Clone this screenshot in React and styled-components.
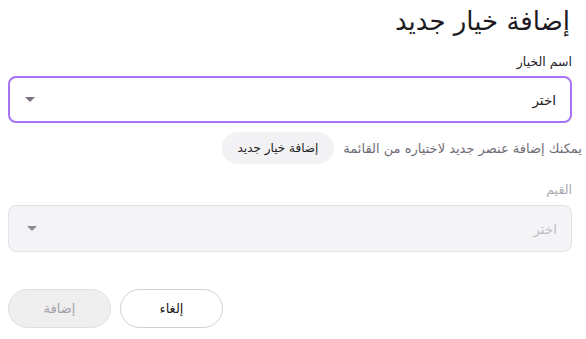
import React from "react";
import styled, { createGlobalStyle } from "styled-components";

const GlobalStyle = createGlobalStyle`
  html, body {
    margin: 0;
    padding: 0;
    background: #ffffff;
  }
  body {
    font-family: "DejaVu Sans", "Noto Sans", sans-serif;
    color: #1d1a22;
  }
`;

const Container = styled.div`
  direction: rtl;
  width: 586px;
  height: 339px;
  box-sizing: border-box;
  padding: 3px 14px 0 8px;
  display: flex;
  flex-direction: column;
`;

const Title = styled.h1`
  margin: 0;
  padding-right: 2px;
  font-size: 26px;
  font-weight: 400;
  line-height: 36px;
  color: #1d1a22;
`;

const Label = styled.label`
  display: block;
  margin-top: ${(p) => p.$top || 0}px;
  font-size: 12.5px;
  line-height: 18px;
  color: ${(p) => (p.$disabled ? "#a9a8ae" : "#1d1a22")};
`;

const SelectBox = styled.div`
  margin-top: ${(p) => p.$top || 0}px;
  height: 47px;
  box-sizing: border-box;
  border-radius: 8px;
  border: ${(p) => (p.$active ? "2px solid #a873f6" : "1px solid #e3e3e7")};
  background: ${(p) => (p.$disabled ? "#f4f4f6" : "#ffffff")};
  display: flex;
  align-items: center;
  justify-content: space-between;
  padding: ${(p) => (p.$active ? "0 14px 0 15px" : "0 14px 0 18px")};
`;

const SelectText = styled.span`
  font-size: 13.5px;
  color: ${(p) => (p.$disabled ? "#bdbcc2" : "#1d1a22")};
`;

const Caret = styled.span`
  width: 0;
  height: 0;
  border-left: 5px solid transparent;
  border-right: 5px solid transparent;
  border-top: 5px solid ${(p) => (p.$disabled ? "#8d8d93" : "#7b7084")};
`;

const HelperRow = styled.div`
  margin-top: 9px;
  margin-right: -10px;
  display: flex;
  align-items: center;
  gap: 9px;
`;

const HelperText = styled.span`
  font-size: 13px;
  color: #6f6d76;
`;

const ChipButton = styled.button`
  font-family: inherit;
  height: 32px;
  padding: 0 16px;
  border: none;
  border-radius: 16px;
  background: #f2f2f4;
  color: #1d1a22;
  font-size: 12px;
  cursor: pointer;
`;

const Actions = styled.div`
  margin-top: 37px;
  display: flex;
  gap: 9px;
  direction: ltr;
`;

const ActionButton = styled.button`
  font-family: inherit;
  width: 103px;
  height: 39px;
  border-radius: 20px;
  font-size: 13px;
  border: 1px solid ${(p) => (p.$disabled ? "#e0e0e2" : "#d3cedb")};
  background: ${(p) => (p.$disabled ? "#efeff0" : "#ffffff")};
  color: ${(p) => (p.$disabled ? "#a3a2a8" : "#1d1a22")};
  cursor: ${(p) => (p.$disabled ? "default" : "pointer")};
`;

export default function App() {
  return (
    <>
      <GlobalStyle />
      <Container>
        <Title>إضافة خيار جديد</Title>
        <Label $top={14}>اسم الخيار</Label>
        <SelectBox $active $top={5}>
          <SelectText>اختر</SelectText>
          <Caret />
        </SelectBox>
        <HelperRow>
          <HelperText>يمكنك إضافة عنصر جديد لاختياره من القائمة</HelperText>
          <ChipButton>إضافة خيار جديد</ChipButton>
        </HelperRow>
        <Label $top={17} $disabled>
          القيم
        </Label>
        <SelectBox $disabled $top={6}>
          <SelectText $disabled>اختر</SelectText>
          <Caret $disabled />
        </SelectBox>
        <Actions>
          <ActionButton $disabled>إضافة</ActionButton>
          <ActionButton>إلغاء</ActionButton>
        </Actions>
      </Container>
    </>
  );
}
